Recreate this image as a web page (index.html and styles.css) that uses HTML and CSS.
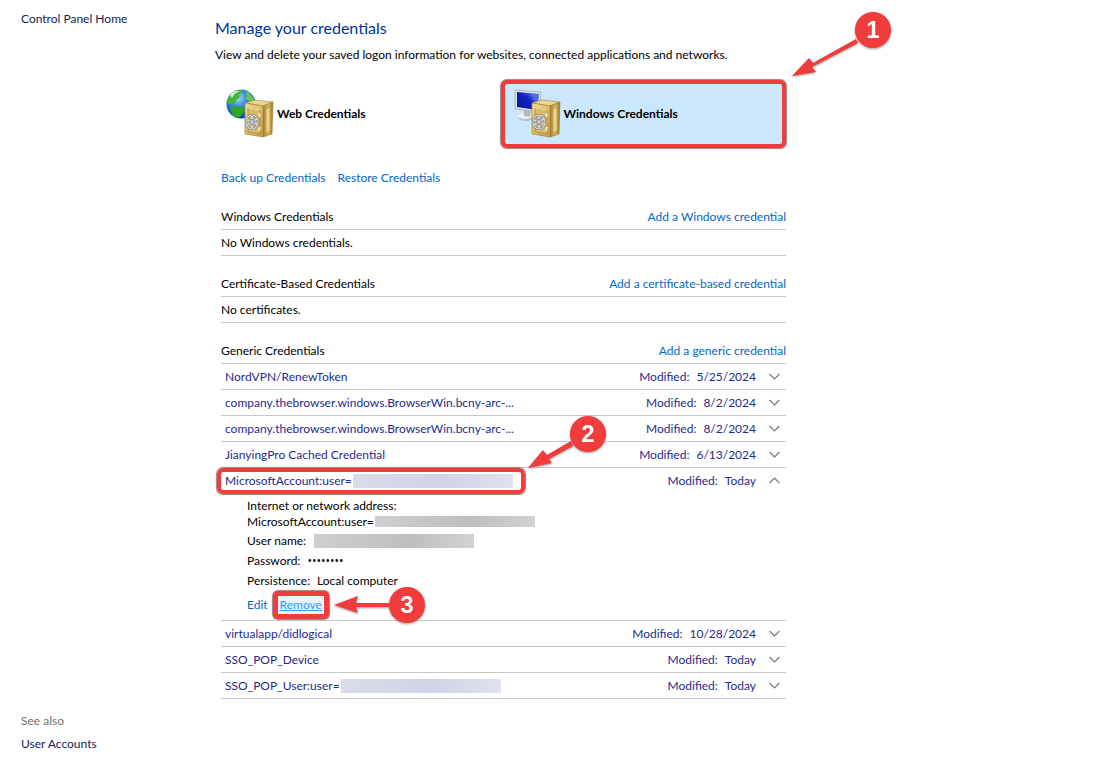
FILE: index.html
```html
<!DOCTYPE html>
<html lang="en">
<head>
  <meta charset="utf-8">
  <title>Credential Manager</title>
  <link rel="stylesheet" href="styles.css">
</head>
<body>
  <!-- Shared icon shapes -->
  <svg class="defs" width="0" height="0" aria-hidden="true">
    <defs>
      <linearGradient id="gold" x1="0" y1="0" x2="1" y2="1">
        <stop offset="0" stop-color="#efdc92"/>
        <stop offset="0.5" stop-color="#dcc06a"/>
        <stop offset="1" stop-color="#c39d48"/>
      </linearGradient>
      <linearGradient id="goldSide" x1="0" y1="0" x2="1" y2="0">
        <stop offset="0" stop-color="#a57f2d"/>
        <stop offset="0.5" stop-color="#d8b95c"/>
        <stop offset="1" stop-color="#a07b29"/>
      </linearGradient>
      <radialGradient id="sea" cx="0.4" cy="0.3" r="0.7">
        <stop offset="0" stop-color="#a5dcfb"/>
        <stop offset="0.45" stop-color="#2f86dc"/>
        <stop offset="1" stop-color="#0b3c9c"/>
      </radialGradient>
      <linearGradient id="screen" x1="0" y1="1" x2="1" y2="0">
        <stop offset="0" stop-color="#0a1690"/>
        <stop offset="0.55" stop-color="#1223c4"/>
        <stop offset="1" stop-color="#6f8cf0"/>
      </linearGradient>
      <g id="safe">
        <path d="M19 14 L29 11 L47 13 L37 17 Z" fill="#ead795" stroke="#a8873a" stroke-width="0.6"/>
        <path d="M37 17 L47 13 L46 45 L37 48 Z" fill="url(#goldSide)" stroke="#98752a" stroke-width="0.6"/>
        <path d="M40 20 L44 18 L44 42 L40 44 Z" fill="#e9d48a" stroke="#b8964a" stroke-width="0.6"/>
        <path d="M19 14 L37 17 L37 48 L19 45 Z" fill="url(#gold)" stroke="#a8873a" stroke-width="0.7"/>
        <path d="M22 19 L34 21 L34 45 L22 43 Z" fill="#d8bc63" stroke="#a5843a" stroke-width="0.8"/>
        <path d="M22 19 L34 21" stroke="#f4e6ae" stroke-width="1"/>
        <ellipse cx="26" cy="33" rx="6" ry="7" fill="#b9ad84" stroke="#77797d" stroke-width="2.200"/>
        <ellipse cx="26" cy="33" rx="6" ry="7" fill="none" stroke="#dfe1e4" stroke-width="1.100"/>
        <path d="M26 27 V39 M21 31 L31 35 M21 36 L31 30" stroke="#e2e4e7" stroke-width="1.300"/>
        <circle cx="26" cy="33" r="2.500" fill="#c4c7cc" stroke="#797b80" stroke-width="0.8"/>
        <path d="M33 24 L34 28 M34 38 L33 42" stroke="#eceef0" stroke-width="1.500"/>
      </g>
      <path id="chevron" d="M0.500 3 L5.500 8 L10.500 3" fill="none" stroke="#7a7a7a" stroke-width="1.200"/>
    </defs>
  </svg>

  <div class="page">
    <nav class="sidebar">
      <a class="nav-link" href="#">Control Panel Home</a>
      <div class="see-also">
        <span class="see-also-title">See also</span>
        <a class="nav-link" href="#">User Accounts</a>
      </div>
    </nav>

    <main class="content">
      <h1>Manage your credentials</h1>
      <p class="intro">View and delete your saved logon information for websites, connected applications and networks.</p>

      <div class="vaults">
        <button class="vault" type="button">
          <svg width="48" height="50" viewBox="0 0 48 50" aria-hidden="true">
            <circle cx="15" cy="15" r="14.500" fill="url(#sea)"/>
            <path d="M3 8 Q8 1 15 1 Q17 4 13 6 Q15 9 10 11 Q9 15 6 15 Q2 17 1 12 Z" fill="#48b43c"/>
            <path d="M4 19 Q11 15 19 19 Q18 26 12 29 Q6 28 4 19 Z" fill="#2fa52d"/>
            <path d="M19 2 Q27 5 29 13 Q25 17 23 12 Q18 10 21 7 Z" fill="#64c64a"/>
            <path d="M4 6 Q9 1 14 2 Q8 4 6 9 Z" fill="#d6f2b4"/>
            <use href="#safe"/>
          </svg>
          <span>Web Credentials</span>
        </button>
        <div class="vault-slot">
          <button class="vault selected" type="button">
            <svg width="48" height="50" viewBox="0 0 48 50" aria-hidden="true">
              <ellipse cx="13" cy="28" rx="8" ry="4" fill="#b9bfc8"/>
              <ellipse cx="12" cy="27" rx="7" ry="3" fill="#eef0f3"/>
              <path d="M11 21 L18 22 L17 28 L11 27 Z" fill="#b4bac3"/>
              <path d="M2 1 L28 3 L26 23 L2 20 Z" fill="#d9dee6" stroke="#a4adba" stroke-width="0.8"/>
              <path d="M4 3 L26 5 L24 21 L4 18 Z" fill="url(#screen)"/>
              <path d="M17 4 L26 5 L24 20 Z" fill="#5971e1" opacity="0.65"/>
              <use href="#safe"/>
            </svg>
            <span>Windows Credentials</span>
          </button>
          <svg class="callout callout-one" width="110" height="76" viewBox="0 0 110 76" role="img" aria-label="Step 1">
            <path d="M70 29 L27 53 L23 48 L6 66 L30 62 L26 57 L72 33 Z"/>
            <circle cx="87" cy="20" r="18"/>
            <text x="87" y="28">1</text>
          </svg>
        </div>
      </div>

      <div class="tools">
        <a href="#">Back up Credentials</a>
        <a href="#">Restore Credentials</a>
      </div>

      <section class="group">
        <header class="group-head">
          <h2>Windows Credentials</h2>
          <a href="#">Add a Windows credential</a>
        </header>
        <p class="empty">No Windows credentials.</p>
      </section>

      <section class="group">
        <header class="group-head">
          <h2>Certificate-Based Credentials</h2>
          <a href="#">Add a certificate-based credential</a>
        </header>
        <p class="empty">No certificates.</p>
      </section>

      <section class="group">
        <header class="group-head">
          <h2>Generic Credentials</h2>
          <a href="#">Add a generic credential</a>
        </header>
        <ul class="list">
          <li>
            <button class="row" type="button">
              <span class="name">NordVPN/RenewToken</span>
              <span>Modified:</span><span>5/25/2024</span>
              <svg class="arrow" width="11" height="11" aria-hidden="true"><use href="#chevron"/></svg>
            </button>
          </li>
          <li>
            <button class="row" type="button">
              <span class="name">company.thebrowser.windows.BrowserWin.bcny-arc-...</span>
              <span>Modified:</span><span>8/2/2024</span>
              <svg class="arrow" width="11" height="11" aria-hidden="true"><use href="#chevron"/></svg>
            </button>
          </li>
          <li>
            <button class="row" type="button">
              <span class="name">company.thebrowser.windows.BrowserWin.bcny-arc-...</span>
              <span>Modified:</span><span>8/2/2024</span>
              <svg class="arrow" width="11" height="11" aria-hidden="true"><use href="#chevron"/></svg>
            </button>
          </li>
          <li>
            <button class="row" type="button">
              <span class="name">JianyingPro Cached Credential</span>
              <span>Modified:</span><span>6/13/2024</span>
              <svg class="arrow" width="11" height="11" aria-hidden="true"><use href="#chevron"/></svg>
            </button>
          </li>
          <li class="open">
            <button class="row" type="button" aria-expanded="true">
              <span class="name">MicrosoftAccount:user=<span class="mask mask-blue"></span></span>
              <span>Modified:</span><span>Today</span>
              <svg class="arrow up" width="11" height="11" aria-hidden="true"><use href="#chevron"/></svg>
            </button>
            <span class="frame"></span>
            <svg class="callout callout-two" width="84" height="60" viewBox="0 0 84 60" role="img" aria-label="Step 2">
              <path d="M46 29 L22 43 L18 38 L3 56 L27 51 L24 47 L48 34 Z"/>
              <circle cx="63" cy="22" r="18"/>
              <text x="63" y="30">2</text>
            </svg>
            <dl class="details">
              <div class="stacked">
                <dt>Internet or network address:</dt>
                <dd>MicrosoftAccount:user=<span class="mask mask-grey thin"></span></dd>
              </div>
              <div><dt>User name:</dt><dd><span class="mask mask-grey"></span></dd></div>
              <div><dt>Password:</dt><dd class="dots">••••••••</dd></div>
              <div><dt>Persistence:</dt><dd>Local computer</dd></div>
            </dl>
            <div class="actions">
              <a href="#">Edit</a>
              <span class="remove-box">
                <a class="remove" href="#">Remove</a>
                <svg class="callout callout-three" width="98" height="40" viewBox="0 0 98 40" role="img" aria-label="Step 3">
                  <path d="M60 18 L27 18 L29 11 L5 20 L29 28 L27 22 L60 22 Z"/>
                  <circle cx="78" cy="20" r="18"/>
                  <text x="78" y="28">3</text>
                </svg>
              </span>
            </div>
          </li>
          <li>
            <button class="row" type="button">
              <span class="name">virtualapp/didlogical</span>
              <span>Modified:</span><span>10/28/2024</span>
              <svg class="arrow" width="11" height="11" aria-hidden="true"><use href="#chevron"/></svg>
            </button>
          </li>
          <li>
            <button class="row" type="button">
              <span class="name">SSO_POP_Device</span>
              <span>Modified:</span><span>Today</span>
              <svg class="arrow" width="11" height="11" aria-hidden="true"><use href="#chevron"/></svg>
            </button>
          </li>
          <li>
            <button class="row" type="button">
              <span class="name">SSO_POP_User:user=<span class="mask mask-blue"></span></span>
              <span>Modified:</span><span>Today</span>
              <svg class="arrow" width="11" height="11" aria-hidden="true"><use href="#chevron"/></svg>
            </button>
          </li>
        </ul>
      </section>
    </main>
  </div>
</body>
</html>
```
FILE: styles.css
```css
* {
  box-sizing: border-box;
}
body {
  margin: 0;
  background: #fff;
  color: #000;
  font-family: Lato, "Open Sans", sans-serif;
  font-size: 12px;
  line-height: 16px;
}
h1, h2, p, ul, dl, dd {
  margin: 0;
  padding: 0;
  font-weight: normal;
}
a {
  color: #0066cc;
  text-decoration: none;
}
button {
  border: none;
  background: none;
  font: inherit;
  text-align: left;
  cursor: pointer;
}
.defs {
  position: absolute;
}
.page {
  display: flex;
  min-height: 100vh;
}
.sidebar {
  flex: 0 0 215px;
  display: flex;
  flex-direction: column;
  justify-content: space-between;
  padding: 11px 10px 10px 21px;
}
.nav-link {
  color: #151c55;
}
.see-also {
  display: flex;
  flex-direction: column;
  gap: 7px;
}
.see-also-title {
  color: #707070;
}
.content {
  flex: 1;
  max-width: 571px;
  padding-top: 18px;
}
h1 {
  font-size: 16px;
  line-height: 20px;
  color: #003399;
}
.intro {
  margin-top: 9px;
  white-space: nowrap;
}

/* Vault switcher */
.vaults {
  display: grid;
  grid-template-columns: 1fr 1fr;
  margin-top: 17px;
}
.vault-slot {
  position: relative;
}
.vault {
  display: flex;
  align-items: center;
  gap: 3px;
  width: 100%;
  height: 68px;
  padding: 0 11px;
  font-weight: bold;
  color: #000;
}
.vault.selected {
  padding: 0 8px;
  background: #cce8ff;
  border: 4px solid #f23c3c;
  border-radius: 6px;
  box-shadow: 0 0 1px 1px #a08080;
}

.tools {
  display: flex;
  gap: 12px;
  padding: 22px 0 0 6px;
}

/* Credential groups */
.group {
  margin: 15px 0 0 6px;
}
.tools + .group {
  margin-top: 18px;
}
.group-head {
  display: flex;
  justify-content: space-between;
  height: 26px;
  padding-top: 5px;
  border-bottom: 1px solid #c8c8c8;
}
h2 {
  font-size: 12px;
}
.empty {
  height: 26px;
  padding-top: 5px;
  border-bottom: 1px solid #c8c8c8;
}
.list {
  list-style: none;
}
.list li {
  border-bottom: 1px solid #c8c8c8;
}
.row {
  display: flex;
  align-items: center;
  gap: 7px;
  width: 100%;
  height: 25px;
  padding: 0 6px 0 4px;
  color: #1f2a8c;
}
.name {
  flex: 1;
  display: flex;
  align-items: center;
}
.arrow {
  margin-left: 6px;
}
.arrow.up {
  transform: rotate(180deg);
}
.mask {
  display: inline-block;
  width: 160px;
  height: 14px;
  margin-left: 1px;
}
.mask-blue {
  background: linear-gradient(90deg, #dadcea, #d0d3e7 55%, #dfe1ee);
}
.mask-grey {
  background: linear-gradient(90deg, #cfcfcf, #bebebe 60%, #d2d2d2);
}
.mask.thin {
  height: 11px;
}

/* Opened credential */
.open {
  position: relative;
}
.details {
  padding: 5px 0 0 26px;
}
.details div {
  display: flex;
  align-items: flex-start;
  gap: 7px;
  height: 20px;
}
.details .stacked {
  display: block;
  height: 35px;
  line-height: 15px;
}
.details dd {
  display: flex;
  align-items: center;
  min-height: 16px;
}
.details .dots {
  font-family: "Open Sans", sans-serif;
}
.actions {
  display: flex;
  align-items: center;
  gap: 5px;
  height: 27px;
  padding: 0 0 3px 26px;
}
.remove-box {
  position: relative;
  padding: 1px 2px;
  border: 5px solid #f23c3c;
  border-radius: 5px;
  box-shadow: 0 0 1px 1px #a08080;
  background: #e5f3ff;
}
.remove {
  color: #3399ff;
  text-decoration: underline;
}
.frame {
  position: absolute;
  top: 0;
  left: -4px;
  width: 308px;
  height: 26px;
  border: 4px solid #f23c3c;
  border-radius: 6px;
  box-shadow: 0 0 1px 1px #a08080;
  pointer-events: none;
}

/* Numbered step markers */
.callout {
  position: absolute;
  z-index: 1;
  overflow: visible;
  fill: #f23c3c;
  filter: drop-shadow(0 1px 1px #999);
}
.callout text {
  fill: #fff;
  font: bold 24px "Liberation Sans", sans-serif;
  text-anchor: middle;
}
.callout-one {
  top: -70px;
  left: 100%;
}
.callout-two {
  top: -56px;
  left: 304px;
}
.callout-three {
  top: -11px;
  left: 51px;
}
```
